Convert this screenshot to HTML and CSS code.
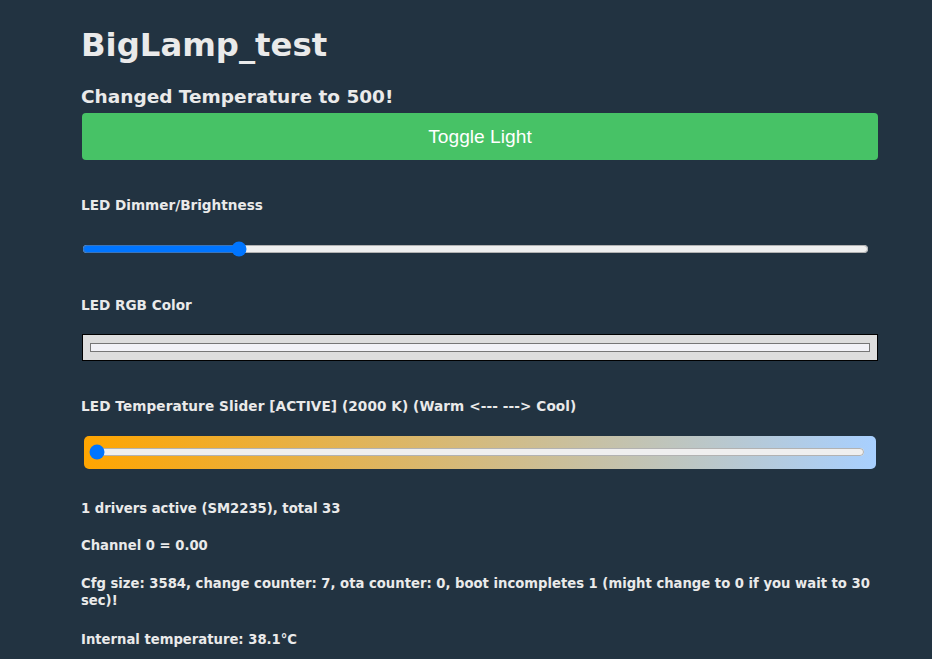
FILE: index.html
```html
<!DOCTYPE html>
<html>
<head>
<meta charset="utf-8">
<title>BigLamp_test</title>
<link rel="stylesheet" href="styles.css">
</head>
<body>
<div class="wrap">
  <h1 class="title">BigLamp_test</h1>
  <h3 class="status">Changed Temperature to 500!</h3>
  <button class="btn-toggle">Toggle Light</button>

  <p class="label label-dim">LED Dimmer/Brightness</p>
  <input class="range range-dim" type="range" min="0" max="100" step="any" value="19.3">

  <p class="label label-rgb">LED RGB Color</p>
  <input class="color" type="color" value="#f2f2f7">

  <p class="label label-temp">LED Temperature Slider [ACTIVE] (2000 K) (Warm &lt;--- ---&gt; Cool)</p>
  <div class="temp-box">
    <input class="range range-temp" type="range" min="154" max="500" value="154">
  </div>

  <p class="info info-1">1 drivers active (SM2235), total 33</p>
  <p class="info info-2">Channel 0 = 0.00</p>
  <p class="info info-3">Cfg size: 3584, change counter: 7, ota counter: 0, boot incompletes 1 (might change to 0 if you wait to 30 sec)!</p>
  <p class="info info-4">Internal temperature: 38.1°C</p>
</div>
</body>
</html>
```

FILE: styles.css
```css
html, body {
  margin: 0;
  padding: 0;
  background: #223341;
}
body {
  font-family: "DejaVu Sans", Verdana, sans-serif;
  color: #eaeaea;
}
.wrap {
  width: 797px;
  padding-left: 81px;
  display: flex;
  flex-direction: column;
  align-items: flex-start;
}
.title {
  font-size: 32.3px;
  font-weight: bold;
  line-height: 37px;
  margin: 27px 0 0 0;
}
.status {
  font-size: 18.5px;
  font-weight: bold;
  line-height: 22px;
  margin: 22px 0 0 0;
}
.btn-toggle {
  margin-top: 5px;
  margin-left: 1px;
  width: 796px;
  height: 47px;
  border: 0;
  border-radius: 4px;
  background: #47c266;
  color: #ffffff;
  font-family: "Liberation Sans", Arial, sans-serif;
  font-size: 19.2px;
  padding: 0;
}
.label, .info {
  font-weight: bold;
  line-height: 16px;
  margin: 0;
}
.label { font-size: 13.6px; }
.label-temp { letter-spacing: 0.1px; }
.info { font-size: 13.2px; line-height: 17px; }
.label-dim { margin-top: 37px; }
.range {
  margin: 0;
  height: 16px;
  display: block;
}
.range-dim {
  margin-top: 28px;
  margin-left: 1px;
  width: 787px;
}
.label-rgb { margin-top: 39.5px; }
.color {
  margin-top: 21.5px;
  margin-left: 1px;
  width: 796px;
  height: 27px;
  box-sizing: border-box;
  -webkit-appearance: none;
  appearance: none;
  background: #dddddd;
  border: 1px solid #000000;
  padding: 0;
  display: block;
}
.color::-webkit-color-swatch-wrapper {
  padding: 8px 7px 8px 7px;
}
.color::-webkit-color-swatch {
  border: 1px solid #767676;
  border-radius: 0;
}
.label-temp { margin-top: 37px; }
.temp-box {
  margin-top: 21.5px;
  margin-left: 3px;
  width: 792px;
  height: 33px;
  box-sizing: border-box;
  border-radius: 5px;
  background: linear-gradient(to right, #ffa500 0%, #a8d0ff 100%);
  padding: 0 11px 0 5px;
  display: flex;
  align-items: center;
}
.range-temp {
  width: 776px;
}
.info-1 { margin-top: 31.5px; }
.info-2 { margin-top: 20px; }
.info-3 { margin-top: 21px; width: 797px; }
.info-4 { margin-top: 22px; }
```
